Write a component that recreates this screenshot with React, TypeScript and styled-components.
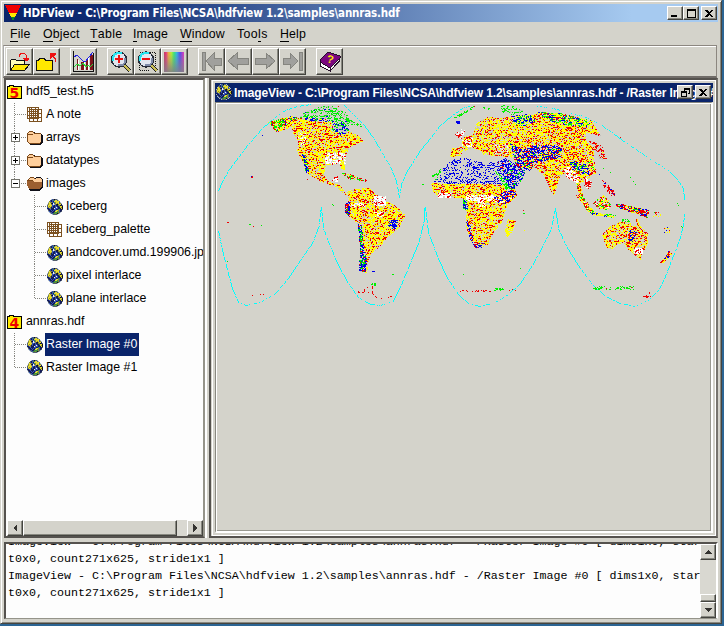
import React from "react";
import styled, { createGlobalStyle, css } from "styled-components";

const face = "#d4d3cb";
const navy = "#0a246a";

const GlobalStyle = createGlobalStyle`
  * { box-sizing: border-box; }
  html, body { margin: 0; padding: 0; overflow: hidden; background: #2c6594; }
  body { width: 724px; height: 626px; }
  svg { display: block; flex: none; shape-rendering: crispEdges; }
`;

const raised = css`
  border: 1px solid;
  border-color: #fff #44443f #44443f #fff;
  box-shadow: inset -1px -1px 0 #888880;
`;

const Window = styled.main`
  width: 722px;
  height: 624px;
  display: flex;
  flex-direction: column;
  padding: 2px 3px 3px 2px;
  background: ${face};
  border: 1px solid;
  border-color: ${face} #44443f #44443f ${face};
  box-shadow: inset 1px 1px 0 #fff, inset -1px -1px 0 #888880;
  font: 12.35px "Liberation Sans", Arial, sans-serif;
  color: #000;
`;

const TitleBar = styled.header`
  height: 18px;
  margin: 1px 0 0 1px;
  flex: none;
  display: flex;
  align-items: center;
  padding: 0 1px 0 1px;
  background: linear-gradient(90deg, ${navy} 0%, #0f2b72 14%, #a6caf0 88%);
  color: #fff;
`;

const WindowTitle = styled.h1`
  margin: 0 auto 0 1px;
  font: bold 11.5px "DejaVu Sans Condensed", "DejaVu Sans", sans-serif;
  font-stretch: condensed;
  letter-spacing: -0.16px;
  white-space: nowrap;
`;

const CaptionButton = styled.button<{ $gap?: number }>`
  ${raised}
  width: 16px;
  height: 14px;
  flex: none;
  padding: 0;
  margin-left: ${(p) => p.$gap ?? 0}px;
  background: ${face};
  display: grid;
  place-items: center;
`;

const MenuBar = styled.nav`
  height: 23px;
  flex: none;
  display: flex;
  align-items: center;
  padding: 1px 0 0 7px;
`;

const MenuItem = styled.span<{ $w: number; $ls: number }>`
  width: ${(p) => p.$w}px;
  letter-spacing: ${(p) => p.$ls}px;
  white-space: nowrap;
`;

const Mnemonic = styled.span`
  border-bottom: 1px solid #000;
  display: inline-block;
  line-height: 13px;
`;

const Toolbar = styled.div`
  height: 33px;
  flex: none;
  margin-right: 1px;
  padding: 2px 0 0 2px;
  display: flex;
  gap: 10px;
  border: solid;
  border-width: 1px 1px 2px;
  border-color: #8c8780 #8c8780 #706c68 #aaa;
  box-shadow: inset 0 1px 0 #fff, inset 1px 0 0 #fff;
`;

const ToolGroup = styled.div`
  display: flex;
`;

const ToolButton = styled.button`
  ${raised}
  width: 27px;
  height: 27px;
  padding: 0;
  background: ${face};
  display: grid;
  place-items: center;
`;

const Panes = styled.div`
  height: 460px;
  flex: none;
  display: flex;
`;

const TreePane = styled.aside`
  width: 201px;
  flex: none;
  margin-left: 1px;
  background: #fdfdfd;
  border: 2px solid;
  border-color: #55524e #95948a #55524e #55524e;
  padding-left: 1px;
  display: flex;
  flex-direction: column;
  overflow: hidden;
`;

const Tree = styled.div`
  flex: 1;
  overflow: hidden;
`;

const TreeRow = styled.div`
  height: 23px;
  display: flex;
  align-items: center;
  white-space: nowrap;
`;

const NodeLabel = styled.span<{ $selected?: boolean }>`
  height: 23px;
  line-height: 23px;
  margin-left: 2px;
  padding: 0 2px 0 1px;
  ${(p) => p.$selected && css`background: ${navy}; color: #fff;`}
`;

const IndentCell = styled.span`
  width: 20px;
  flex: none;
`;

const Splitter = styled.div`
  width: 4px;
  flex: none;
  border-left: 2px solid #fff;
`;

const Desktop = styled.section`
  flex: 1;
  min-width: 0;
  border: 2px solid;
  border-color: #55524e #77746e #55524e #55524e;
  padding-left: 1px;
`;

const InnerFrame = styled.article`
  height: 100%;
  padding: 2px;
  border: 1px solid #fff;
  display: flex;
  flex-direction: column;
`;

const InnerTitleBar = styled.header`
  position: relative;
  height: 19px;
  flex: none;
  display: flex;
  align-items: center;
  padding: 0 0 2px 1px;
  background: ${navy};
  color: #fff;
`;

const InnerTitle = styled.h2`
  flex: 1;
  margin: 4px 0 0 2px;
  min-width: 0;
  font-size: 12px;
  line-height: 17px;
  letter-spacing: -0.12px;
  white-space: nowrap;
  overflow: hidden;
`;

const InnerControls = styled.div`
  position: absolute;
  top: 2px;
  right: 2px;
  display: flex;
`;

const Canvas = styled.div`
  flex: 1;
  min-height: 0;
  overflow: hidden;
  border: solid;
  border-width: 1px 2px 2px 1px;
  border-color: #888880 #fff #fff #888880;
  box-shadow: inset 1px 1px 0 #fff, inset -1px -1px 0 #999990;
`;

const Console = styled.section`
  flex: 1;
  min-height: 0;
  margin: 4px 0 1px 1px;
  display: flex;
  background: #fdfdfd;
  border: solid;
  border-width: 2px 2px 1px 2px;
  border-color: #55524e #fff #95948a #55524e;
`;

const Log = styled.pre`
  flex: 1;
  min-width: 0;
  margin: 0;
  padding-left: 2px;
  display: flex;
  flex-direction: column;
  overflow: hidden;
  font: 11.67px/17px "Liberation Mono", "Courier New", monospace;
`;

const LogLine = styled.span<{ $lift?: boolean }>`
  height: 17px;
  margin-top: ${(p) => (p.$lift ? -10 : 0)}px;
  flex: none;
`;

const Scroll = styled.div<{ $vertical?: boolean }>`
  flex: none;
  display: flex;
  flex-direction: ${(p) => (p.$vertical ? "column" : "row")};
  ${(p) => (p.$vertical ? "width: 16px;" : "height: 16px;")}
  background: #d9d8d1;
`;

const ScrollPart = styled.div<{ $w?: number; $h?: number; $push?: boolean; $down?: boolean }>`
  ${raised}
  flex: none;
  width: ${(p) => p.$w ?? 16}px;
  height: ${(p) => p.$h ?? 16}px;
  margin-left: ${(p) => (p.$push ? "auto" : 0)};
  margin-top: ${(p) => (p.$down ? "auto" : 0)};
  background: ${face};
  display: grid;
  place-items: center;
`;

/* ---------- pixel drawing ---------- */

type Pt = [number, number];
type Mix = Record<string, number>;

const palette: Record<string, string> = {
  Y: "#ffff00", R: "#f00000", B: "#0000e8", G: "#00f000", W: "#ffffff", C: "#00ffff", S: "#c2c1bb",
};

function inside(x: number, y: number, poly: Pt[]) {
  let hit = false;
  for (let i = 0, j = poly.length - 1; i < poly.length; j = i++) {
    const [xi, yi] = poly[i];
    const [xj, yj] = poly[j];
    if (yi > y !== yj > y && x < ((xj - xi) * (y - yi)) / (yj - yi) + xi) hit = !hit;
  }
  return hit;
}

const land: Mix = { Y: 0.5, R: 0.19, S: 0.08 };
const box = (a: number, b: number, c: number, d: number): Pt[] => [[a, b], [c, b], [c, d], [a, d]];

const regions: { shape: Pt[]; mix: Mix; over?: boolean }[] = [
  { shape: [[274,125],[280,118],[292,117],[322,117],[337,127],[352,132],[360,137],[364,141],[350,147],[347,153],[344,160],[342,170],[340,164],[326,165],[324,175],[329,182],[339,184],[347,195],[343,194],[337,187],[319,181],[307,173],[302,160],[297,151],[299,142],[293,134],[292,127],[278,132]], mix: land },
  { shape: [[305,112],[325,105],[345,111],[355,125],[345,128],[328,119],[298,118]], mix: { G: 0.3, S: 0.15, B: 0.02 }, over: true },
  { shape: [[345,117],[364,126],[361,128],[345,120]], mix: { G: 0.4 } },
  { shape: [[268,122],[292,116],[298,118],[276,132]], mix: { G: 0.24, Y: 0.3, R: 0.22, B: 0.05 }, over: true },
  { shape: [[304,117],[334,121],[345,132],[340,135],[330,122],[304,120]], mix: { B: 0.4, G: 0.1, Y: 0.2 }, over: true },
  { shape: [[334,126],[342,122],[350,130],[345,135],[331,130]], mix: { B: 0.23, G: 0.25, S: 0.1 }, over: true },
  { shape: box(325,153,346,164), mix: { W: 0.4, Y: 0.12, R: 0.13 }, over: true },
  { shape: box(298,133,306,145), mix: { W: 0.24, Y: 0.3, R: 0.2 }, over: true },
  { shape: [[302,154],[306,156],[309,172],[306,173]], mix: { B: 0.6, G: 0.2, Y: 0.1 }, over: true },
  { shape: [[331,178],[338,176],[338,182],[332,181]], mix: { W: 0.4, R: 0.25 }, over: true },
  { shape: [[342,173],[350,174],[367,180],[366,182],[347,179]], mix: { R: 0.25, G: 0.15, Y: 0.1 } },
  { shape: [[340,160],[344,160],[345,170],[341,169]], mix: { Y: 0.7 } },
  { shape: [[347,192],[355,189],[369,188],[377,195],[385,200],[399,208],[406,215],[399,228],[387,238],[379,248],[370,255],[367,273],[360,272],[360,233],[359,225],[350,217],[346,210],[349,200]], mix: land },
  { shape: box(374,196,386,206), mix: { W: 0.6, R: 0.15, S: 0.05 }, over: true },
  { shape: box(351,203,366,207), mix: { W: 0.35, R: 0.2, Y: 0.2 }, over: true },
  { shape: box(374,212,384,217), mix: { W: 0.3, Y: 0.3, R: 0.2 }, over: true },
  { shape: [[389,221],[399,219],[396,230],[388,227]], mix: { B: 0.5, Y: 0.25 }, over: true },
  { shape: [[358,224],[362,226],[364,250],[367,259],[366,272],[359,271],[360,250]], mix: { B: 0.32, G: 0.25, R: 0.15 }, over: true },
  { shape: [[345,205],[350,200],[350,218],[345,212]], mix: { B: 0.35, G: 0.1, R: 0.2, Y: 0.1 }, over: true },
  { shape: [[476,124],[487,117],[500,118],[515,116],[540,114],[560,115],[580,118],[592,122],[601,136],[595,135],[586,132],[586,140],[594,148],[595,170],[588,180],[580,183],[572,178],[566,173],[560,176],[557,186],[554,196],[549,187],[544,175],[535,168],[526,170],[518,163],[510,157],[495,156],[483,155],[482,151],[472,148],[465,151],[462,145],[464,137],[473,135]], mix: { Y: 0.45, R: 0.21, S: 0.08 } },
  { shape: [[452,148],[464,147],[461,156],[450,157]], mix: { Y: 0.5, R: 0.2, S: 0.1 } },
  { shape: [[455,135],[461,128],[465,130],[463,139],[458,139]], mix: { W: 0.2, R: 0.35 } },
  { shape: [[462,140],[473,137],[472,147],[462,146]], mix: { W: 0.35, R: 0.25, Y: 0.15 }, over: true },
  { shape: box(495,144,508,154), mix: { W: 0.14, R: 0.27, Y: 0.22 }, over: true },
  { shape: [[512,116],[530,114],[536,121],[525,127],[513,124]], mix: { B: 0.3, G: 0.14, Y: 0.3 }, over: true },
  { shape: [[535,112],[560,113],[593,121],[588,127],[570,126],[550,121]], mix: { B: 0.14, G: 0.2, Y: 0.3, R: 0.12 }, over: true },
  { shape: [[510,143],[523,150],[536,145],[557,145],[563,150],[560,158],[535,163],[530,171],[516,166]], mix: { B: 0.36, G: 0.05, R: 0.14, Y: 0.14 }, over: true },
  { shape: [[570,161],[590,163],[592,175],[583,174],[571,169]], mix: { B: 0.25, G: 0.18, Y: 0.22, R: 0.05 }, over: true },
  { shape: [[563,167],[570,167],[580,179],[578,184],[567,178]], mix: { W: 0.45, R: 0.2, Y: 0.1 }, over: true },
  { shape: [[586,178],[592,182],[590,190],[584,186]], mix: { W: 0.2, R: 0.4 } },
  { shape: [[589,139],[602,146],[607,159],[600,162],[597,152],[589,146]], mix: { R: 0.28, Y: 0.04, S: 0.12 } },
  { shape: [[588,154],[594,154],[596,174],[589,176]], mix: { R: 0.3, Y: 0.3, G: 0.04 }, over: true },
  { shape: [[452,160],[467,157],[483,163],[497,162],[501,170],[511,190],[500,184],[450,184],[434,182],[437,172],[448,164]], mix: { B: 0.21, S: 0.04 }, over: true },
  { shape: [[432,176],[440,167],[442,171],[436,181]], mix: { G: 0.45 }, over: true },
  { shape: [[497,162],[506,158],[516,165],[526,171],[523,178],[514,191],[507,185]], mix: { B: 0.37, G: 0.08, R: 0.04 }, over: true },
  { shape: [[431,183],[450,184],[500,184],[516,190],[517,196],[507,206],[502,222],[494,232],[488,245],[476,249],[470,238],[466,226],[466,212],[463,198],[445,197],[434,194]], mix: land, over: true },
  { shape: box(466,195,494,201), mix: { W: 0.55, Y: 0.14, R: 0.15 }, over: true },
  { shape: box(478,201,486,207), mix: { W: 0.4, Y: 0.3, R: 0.15 }, over: true },
  { shape: box(438,193,451,198), mix: { W: 0.6, R: 0.18 }, over: true },
  { shape: [[494,196],[510,189],[517,194],[506,204],[495,202]], mix: { B: 0.36, R: 0.2, W: 0.1, Y: 0.12 }, over: true },
  { shape: [[495,171],[498,172],[512,190],[507,191]], mix: { G: 0.45 }, over: true },
  { shape: [[463,199],[467,200],[468,210],[463,210]], mix: { G: 0.3, B: 0.3 }, over: true },
  { shape: [[466,221],[470,222],[474,244],[485,243],[483,248],[475,248],[470,239]], mix: { B: 0.4, R: 0.2, Y: 0.1 }, over: true },
  { shape: [[508,219],[516,221],[512,233],[507,237],[505,231]], mix: { Y: 0.55, R: 0.16 } },
  { shape: [[576,183],[580,183],[583,194],[590,207],[597,213],[588,212],[581,201],[575,196],[579,194]], mix: { R: 0.3, Y: 0.32, G: 0.12, W: 0.06 } },
  { shape: [[593,203],[603,195],[608,199],[612,207],[607,210],[597,208]], mix: { R: 0.34, Y: 0.2, G: 0.08, W: 0.03 } },
  { shape: [[602,180],[606,182],[614,190],[615,196],[611,196],[603,186]], mix: { R: 0.42, B: 0.06 } },
  { shape: [[612,204],[622,204],[635,207],[649,210],[648,218],[636,214],[621,209]], mix: { R: 0.28, B: 0.16, Y: 0.22, G: 0.08 } },
  { shape: [[588,211],[596,213],[617,215],[614,218],[593,215]], mix: { Y: 0.35, G: 0.2, B: 0.13 } },
  { shape: [[602,235],[610,226],[622,221],[630,219],[631,226],[637,226],[637,218],[640,225],[648,234],[648,244],[643,252],[641,260],[636,256],[628,250],[624,243],[618,244],[612,249],[606,247]], mix: { Y: 0.43, R: 0.15, S: 0.1 } },
  { shape: [[629,230],[637,232],[632,243],[628,240]], mix: { B: 0.3, R: 0.25, Y: 0.25 }, over: true },
  { shape: box(634,248,643,254), mix: { W: 0.7, R: 0.2 }, over: true },
  { shape: box(622,219,630,222), mix: { G: 0.5 }, over: true },
  { shape: [[669,250],[673,254],[663,263],[660,263],[666,256]], mix: { Y: 0.38, R: 0.4, B: 0.1 } },
  { shape: [[453,118],[474,106],[476,107],[456,119]], mix: { G: 0.5 } },
  { shape: box(482,107,490,111), mix: { G: 0.3 } },
  { shape: [[500,105],[520,107],[524,112],[512,115],[501,112]], mix: { G: 0.24, S: 0.06 } },
  { shape: box(456,121,460,124), mix: { B: 0.7 } },
  { shape: box(593,286,634,290), mix: { G: 0.28, R: 0.03 } },
  { shape: box(494,288,504,291), mix: { G: 0.5 } },
  { shape: box(457,290,495,292), mix: { R: 0.22 } },
  { shape: box(509,289,518,292), mix: { R: 0.2 } },
  { shape: [[643,294],[649,291],[652,296],[644,299]], mix: { R: 0.25 } },
  { shape: box(371,283,376,286), mix: { G: 0.6 } },
  { shape: box(358,291,369,294), mix: { R: 0.25 } },
  { shape: box(372,271,375,272), mix: { B: 1 } },
  { shape: box(251,176,253,178), mix: { R: 0.5, B: 0.5 } },
  { shape: box(664,227,670,233), mix: { R: 0.12, Y: 0.16, B: 0.05 } },
  { shape: box(653,212,661,217), mix: { R: 0.16, Y: 0.1, G: 0.04 } },
];

const outlines: Pt[][] = [
  [[218,191],[222,181],[229,169],[238,157],[248,144],[262,128],[276,116],[285,110],[297,106],[311,104]],
  [[338,104],[344,105],[352,113],[364,125],[374,139],[382,153],[390,166],[396,181],[399,197],[401,184],[406,172],[412,163],[420,150],[430,138],[440,125],[452,115],[462,108],[474,104]],
  [[537,106],[550,107],[560,110]],
  [[570,113],[584,116],[600,124],[610,131],[625,142],[640,152],[655,162],[668,170],[676,178],[683,188],[684,200]],
  [[218,230],[222,250],[227,270],[232,288],[238,302],[246,305],[260,302],[275,293],[288,278],[300,260],[312,243],[319,225],[320,207]],
  [[321,207],[323,228],[330,246],[338,265],[348,283],[358,297],[370,304],[380,305],[393,301],[402,282],[411,260],[418,243],[424,220],[424,207]],
  [[425,207],[428,232],[437,256],[446,276],[458,294],[468,303],[480,306],[495,302],[508,294],[520,283],[532,265],[543,245],[551,228],[555,208],[558,228],[566,246],[578,265],[592,284],[605,296],[620,303],[635,306],[648,300],[658,290],[665,276],[672,258],[679,240],[683,225],[684,213]],
];

const strokes: { c: string; pts: Pt[]; keep: number }[] = [
  { c: "R", pts: [[362,292],[366,287],[372,286],[372,293],[376,297],[386,298],[392,295]], keep: 0.65 },
  { c: "R", pts: [[242,298],[249,296],[258,294],[264,294],[274,293]], keep: 0.3 },
  { c: "R", pts: [[636,219],[637,224],[641,229],[646,234]], keep: 0.9 },
  { c: "R", pts: [[370,238],[380,238]], keep: 1 },
];

const specks: [string, number, number][] = [
  ["B",262,135],["G",249,224],["G",250,224],["R",253,226],["G",261,225],["G",227,261],["R",227,222],["R",228,222],
  ["G",332,204],["G",333,205],["R",307,179],["G",392,274],["G",393,274],["G",422,184],["G",423,184],["R",523,210],
  ["G",523,213],["G",524,213],["Y",524,230],["G",463,274],["G",520,268],["G",630,177],["G",633,181],["G",635,184],
  ["G",610,172],["G",603,168],["B",599,174],["G",677,203],["G",678,205],["G",681,226],["G",682,227],["R",474,106],
  ["R",338,106],["G",332,106],["R",620,137],
];

function buildMap() {
  let seed = 90417;
  const rnd = () => {
    seed = (seed * 1664525 + 1013904223) >>> 0;
    return seed / 4294967296;
  };
  const cells = new Map<string, string>();
  regions.forEach(({ shape, mix, over }) => {
    const xs = shape.map((p) => p[0]);
    const ys = shape.map((p) => p[1]);
    for (let y = Math.min(...ys); y <= Math.max(...ys); y++) {
      let last = "";
      for (let x = Math.min(...xs); x <= Math.max(...xs); x++) {
        if (!inside(x + 0.5, y + 0.5, shape)) continue;
        let pick = "";
        if (last && rnd() < 0.2) pick = last;
        else {
          let r = rnd();
          for (const key of Object.keys(mix)) {
            if (r < mix[key]) { pick = key; break; }
            r -= mix[key];
          }
        }
        last = pick;
        const id = `${x},${y}`;
        if (pick) cells.set(id, pick);
        else if (over) cells.delete(id);
      }
    }
  });
  const trace = (pts: Pt[], c: string, keep: number) => {
    for (let i = 1; i < pts.length; i++) {
      const [ax, ay] = pts[i - 1];
      const [bx, by] = pts[i];
      const n = Math.max(Math.abs(bx - ax), Math.abs(by - ay));
      const flat = Math.abs(bx - ax) > Math.abs(by - ay) * 1.4 ? 0.6 : 1;
      for (let k = 0; k < n; k++) {
        if (rnd() > keep * flat) continue;
        cells.set(`${Math.round(ax + ((bx - ax) * k) / n)},${Math.round(ay + ((by - ay) * k) / n)}`, c);
      }
    }
  };
  outlines.forEach((o) => trace(o, "C", 0.8));
  strokes.forEach((s) => trace(s.pts, s.c, s.keep));
  specks.forEach(([c, x, y]) => cells.set(`${x},${y}`, c));
  const paths: Record<string, string> = {};
  cells.forEach((c, id) => {
    const [x, y] = id.split(",").map(Number);
    paths[c] = (paths[c] ?? "") + `M${x} ${y}h1v1h-1z`;
  });
  return paths;
}

const mapPaths = buildMap();

const WorldMap = () => (
  <svg width="494" height="420" viewBox="216 103 494 420">
    {Object.keys(mapPaths).map((c) => <path key={c} d={mapPaths[c]} fill={palette[c]} />)}
  </svg>
);

const inks: Record<string, string> = {
  k: "#101018", n: "#141c58", b: "#3454b4", y: "#e6dc30", o: "#8c8a30", g: "#3e8f42", w: "#f3f3f3", s: "#a9b8c8", d: "#555f70",
  p: "#ffcf9c", t: "#9c5f30", l: "#7c4818", r: "#f00000", x: "#55524e", Y: "#ffe800", c: "#ffffb0",
};

const Sprite = ({ rows }: { rows: string[] }) => (
  <svg width={rows[0].length} height={rows.length} viewBox={`0 0 ${rows[0].length} ${rows.length}`}>
    {rows.flatMap((row, y) =>
      [...row].map((ch, x) => ch !== "." && <rect key={`${x}-${y}`} x={x} y={y} width="1" height="1" fill={inks[ch]} />),
    )}
  </svg>
);

const globeRows = [
  "....sbdkdds.....", "...dnbgbyyds....", "..obnbnyyyyyo...", ".syoobbgoyyybs..", ".oyynkwboyoybos.", "soyyobwsonkoyyn.",
  "dyyyybbnbnnooknd", "dyoyobnnbbnngyyk", "boyonbnnbwbnnyok", "nnbonnnwbbbnnnyk", "snnbnnnbbnnggnnd", ".dnnbnbnbyyobnn.",
  ".sbnnbnnyygobnd.", "..sdbnnggggods..", "...sdbggogkds...", ".....sdddds.....",
];

const folderRows = [
  "................", "..llll..........", ".lpppplk........", "lpppppplllllll..", "llllllppppppppk.", "lpppppppppppppkk",
  "lpppppppppppppkk", "lpppppppppppppkk", "lpppppppppppppkk", "lpppppppppppppkk", "lpppppppppppppkk", "lpppppppppppppkk",
  ".lppppppppppplkk", "..lllllllllllkk.", "...kkkkkkkkkkk..", "................",
];

const openFolderRows = [
  "................", "...llll..kkkkk..", "..lpppplkpppppk.", ".lpppppppppppppk", "llllllpppppppppk", "tttttttppppppppk",
  "tttttttttttttttk", "tttttttttttttttk", "tttttttttttttttk", "tttttttttttttttk", ".ttttttttttttttk", ".tttttttttttttkk",
  "..tttttttttttkk.", "..kkkkkkkkkkkk..", "...kkkkkkkkkk...", "................",
];

const Globe = () => <Sprite rows={globeRows} />;
const Folder = ({ open }: { open?: boolean }) => <Sprite rows={open ? openFolderRows : folderRows} />;

const TableIcon = () => (
  <svg width="16" height="16" viewBox="0 0 16 16">
    <path d="M.5.5h11v11H.5zM.5 4.500h11M4.500.5v11M8.500.5v11M.5 8.500h11M2.500.5v2h12v12h-12v-12M3 6.500h12M3 10.500h12M6.500 2.500v12M10.500 2.500v12" fill="none" stroke="#7c5120" />
  </svg>
);

const FileText = styled.text`
  font: bold 14px "DejaVu Sans", sans-serif;
  fill: #f00000;
`;

const FileIcon = ({ digit }: { digit: string }) => (
  <svg width="16" height="16" viewBox="0 0 16 16">
    <path d="M.5 2.500h2v-1h4v1h8v12H.5z" fill="#ffec00" stroke="#000" />
    <FileText x="2.500" y="13.600">{digit}</FileText>
  </svg>
);

const Guide = ({ last, toggle }: { last?: boolean; toggle?: "plus" | "minus" }) => (
  <svg width="20" height="23" viewBox="0 0 20 23">
    <path d={`M7.500 0V${last ? 12 : 23}M8 11.500H20`} fill="none" stroke="#85857f" strokeDasharray="1 1" />
    {toggle && (
      <>
        <path d="M4.500 7.500h8v8h-8z" fill="#fff" stroke="#73736c" />
        <path d={toggle === "plus" ? "M6 11.500h5M8.500 9v5" : "M6 11.500h5"} stroke="#000" />
      </>
    )}
  </svg>
);

const Logo = () => (
  <svg width="17" height="16" viewBox="0 0 17 16">
    <path d="M0 0h16l-4 8H4z" fill="#f00000" />
    <path d="M4 8h8l-2 4H6z" fill="#ffe800" />
    <path d="M6 12h4l-2 4z" fill="#08852a" />
  </svg>
);

const OpenIcon = () => (
  <svg width="21" height="20" viewBox="0 0 21 20">
    <path d="M1.500 18V8.500l1-1h4l1 1h8v4" fill="#ffffb8" stroke="#111" />
    <path d="M1.500 18.500l4-6h15l-5 6z" fill="#ffe800" stroke="#111" />
    <path d="M10.500 4.500v-2l2-1h3l2 2v3" fill="none" stroke="#ee1010" />
    <path d="M13 6h7v1l-2 2h-2z" fill="#ee1010" />
  </svg>
);

const CloseIcon = () => (
  <svg width="21" height="20" viewBox="0 0 21 20">
    <path d="M.5 18.500V8.500h2l1-2h5l1 2h7v10z" fill="#ffe800" stroke="#111" />
    <path d="M14 1h6v1l-2 2 2 3v3h-1V8l-3-3-2 2z" fill="#ee1010" />
  </svg>
);

const ChartIcon = () => (
  <svg width="21" height="21" viewBox="0 0 21 21">
    <path d="M4 19V8h1v11zM8 19v-8h3v8zM13 19V9h2v10zM17 19V4h3v15z" fill="#7d141c" />
    <path d="M5 19V9h1v10zM11 19v-8h1v8zM15 19V7h1v12z" fill="#fff" />
    <path d="M.5 0v20.500H21M20.500 2v18" fill="none" stroke="#111" />
    <path d="M1 6l3-2 6 6 2 1 8-10" fill="none" stroke="#2222e0" />
    <path d="M1 16l3-3 3 2 3-3 3 4 2-2 2 2 3-3" fill="none" stroke="#28d838" strokeWidth="1.200" />
  </svg>
);

const ZoomIcon = ({ out }: { out?: boolean }) => (
  <svg width="22" height="22" viewBox="0 0 22 22">
    {out && <path d="M3 1.500h16M3 19.500h10M2.500 14v5M18.500 2v14" fill="none" stroke="#111" strokeDasharray="1 1" />}
    <path d="M13 13l7 7" stroke="#222" strokeWidth="4" />
    <path d="M14 14l6 6" stroke="#c8bd54" strokeWidth="1.500" />
    <circle cx="9" cy="8.500" r="7.500" fill="#e0e6ef" stroke="#262c38" strokeWidth="1.300" />
    <path d="M3 10V6l2-3 3-1h4" fill="none" stroke="#28e4ef" strokeWidth="2" />
    <path d="M15 7v4l-2 3H8" fill="none" stroke="#7f8ba8" strokeWidth="1.800" />
    <path d={out ? "M5 7h8v2H5z" : "M5 7h3V4h2v3h3v2h-3v3H8V9H5z"} fill="#ee1010" />
  </svg>
);

const PaletteIcon = () => (
  <svg width="21" height="20" viewBox="0 0 21 20">
    <defs>
      <linearGradient id="hues">
        <stop offset="0" stopColor="#c04058" /><stop offset=".1" stopColor="#e83080" /><stop offset=".22" stopColor="#f4a840" />
        <stop offset=".36" stopColor="#b8ef34" /><stop offset=".5" stopColor="#38e878" /><stop offset=".64" stopColor="#30b4e8" />
        <stop offset=".8" stopColor="#5448f4" /><stop offset="1" stopColor="#e838b8" />
      </linearGradient>
      <linearGradient id="fade" x2="0" y2="1">
        <stop offset="0" stopColor="#888" stopOpacity="0" /><stop offset="1" stopColor="#808088" stopOpacity=".9" />
      </linearGradient>
    </defs>
    <path d="M0 0h20v20H0z" fill="url(#hues)" />
    <path d="M0 0h20v20H0z" fill="url(#fade)" />
  </svg>
);

const arrowShapes = {
  first: "M1 1h3v18H1zM5 10l8-8v5h7v7h-7v5z",
  back: "M0 10l9-8v5h11v6H9v5z",
  next: "M20 10l-9-8v5H0v6h11v5z",
  last: "M17 1h3v18h-3zM16 10L8 2v5H1v6h7v5z",
};

const ArrowIcon = ({ kind }: { kind: keyof typeof arrowShapes }) => (
  <svg width="21" height="21" viewBox="0 0 21 21">
    <path d={arrowShapes[kind]} fill="#a0a09d" stroke="#85857f" strokeWidth="1" />
  </svg>
);

const BookText = styled.text`
  font: bold 11px "Liberation Sans", sans-serif;
  fill: #fff000;
`;

const BookIcon = () => (
  <svg width="22" height="21" viewBox="0 0 22 21">
    <path d="M1 10l10 7v3L1 15z" fill="#fff" stroke="#27122a" />
    <path d="M11 17l9-10v3.500L11 20z" fill="#f4f4f4" stroke="#27122a" />
    <path d="M9 1l12 4v2L11 17 1 11V9z" fill="#7a087f" stroke="#27122a" />
    <BookText x="8" y="12" transform="rotate(12 11 8)">?</BookText>
  </svg>
);

const Cross = () => (
  <svg width="8" height="7" viewBox="0 0 8 7"><path d="M0 0h2l2 2 2-2h2L5 3.500 8 7H6L4 5 2 7H0l3-3.500z" /></svg>
);

const triangles = { left: "M6 0v8L2 4z", right: "M2 0v8l4-4z", up: "M0 6h8L4 2z", down: "M0 2h8L4 6z" };
const Arrow = ({ to }: { to: keyof typeof triangles }) => (
  <svg width="8" height="8" viewBox="0 0 8 8"><path d={triangles[to]} fill="#33322f" /></svg>
);

/* ---------- content ---------- */

type Menu = { name: string; width: number; spacing?: number; key?: number };

const menus: Menu[] = [
  { name: "File", width: 33 },
  { name: "Object", width: 47 },
  { name: "Table", width: 43, spacing: 0.3 },
  { name: "Image", width: 47 },
  { name: "Window", width: 57 },
  { name: "Tools", width: 43, spacing: 0.4, key: 3 },
  { name: "Help", width: 30 },
];

type Node = { label: string; icon: React.ReactNode; depth: number; last?: boolean; toggle?: "plus" | "minus"; selected?: boolean };

const nodes: Node[] = [
  { label: "hdf5_test.h5", icon: <FileIcon digit="5" />, depth: 0 },
  { label: "A note", icon: <TableIcon />, depth: 1 },
  { label: "arrays", icon: <Folder />, depth: 1, toggle: "plus" },
  { label: "datatypes", icon: <Folder />, depth: 1, toggle: "plus" },
  { label: "images", icon: <Folder open />, depth: 1, toggle: "minus", last: true },
  { label: "Iceberg", icon: <Globe />, depth: 2 },
  { label: "iceberg_palette", icon: <TableIcon />, depth: 2 },
  { label: "landcover.umd.199906.jpg", icon: <Globe />, depth: 2 },
  { label: "pixel interlace", icon: <Globe />, depth: 2 },
  { label: "plane interlace", icon: <Globe />, depth: 2, last: true },
  { label: "annras.hdf", icon: <FileIcon digit="4" />, depth: 0 },
  { label: "Raster Image #0", icon: <Globe />, depth: 1, selected: true },
  { label: "Raster Image #1", icon: <Globe />, depth: 1, last: true },
];

const openedLine = "ImageView - C:\\Program Files\\NCSA\\hdfview 1.2\\samples\\annras.hdf - /Raster Image #0 [ dims1x0, star";
const rangeLine = "t0x0, count271x625, stride1x1 ]";

export default function App() {
  return (
    <>
      <GlobalStyle />
      <Window>
        <TitleBar>
          <Logo />
          <WindowTitle>HDFView - C:\Program Files\NCSA\hdfview 1.2\samples\annras.hdf</WindowTitle>
          <CaptionButton aria-label="Minimize"><svg width="8" height="8"><path d="M0 6h6v2H0z" /></svg></CaptionButton>
          <CaptionButton aria-label="Maximize"><svg width="9" height="9"><path d="M0 0h9v9H0zM1 2v6h7V2z" fillRule="evenodd" /></svg></CaptionButton>
          <CaptionButton aria-label="Close" $gap={2}><Cross /></CaptionButton>
        </TitleBar>
        <MenuBar>
          {menus.map(({ name, width, spacing = 0.15, key = 0 }) => (
            <MenuItem key={name} $w={width} $ls={spacing}>
              {name.slice(0, key)}<Mnemonic>{name[key]}</Mnemonic>{name.slice(key + 1)}
            </MenuItem>
          ))}
        </MenuBar>
        <Toolbar>
          <ToolGroup>
            <ToolButton><OpenIcon /></ToolButton>
            <ToolButton><CloseIcon /></ToolButton>
          </ToolGroup>
          <ToolGroup><ToolButton><ChartIcon /></ToolButton></ToolGroup>
          <ToolGroup>
            <ToolButton><ZoomIcon /></ToolButton>
            <ToolButton><ZoomIcon out /></ToolButton>
            <ToolButton><PaletteIcon /></ToolButton>
          </ToolGroup>
          <ToolGroup>
            <ToolButton><ArrowIcon kind="first" /></ToolButton>
            <ToolButton><ArrowIcon kind="back" /></ToolButton>
            <ToolButton><ArrowIcon kind="next" /></ToolButton>
            <ToolButton><ArrowIcon kind="last" /></ToolButton>
          </ToolGroup>
          <ToolGroup><ToolButton><BookIcon /></ToolButton></ToolGroup>
        </Toolbar>
        <Panes>
          <TreePane>
            <Tree>
              {nodes.map((n) => (
                <TreeRow key={n.label}>
                  {n.depth === 2 && <IndentCell />}
                  {n.depth > 0 && <Guide last={n.last} toggle={n.toggle} />}
                  {n.icon}
                  <NodeLabel $selected={n.selected}>{n.label}</NodeLabel>
                </TreeRow>
              ))}
            </Tree>
            <Scroll>
              <ScrollPart><Arrow to="left" /></ScrollPart>
              <ScrollPart $w={154} />
              <ScrollPart $push><Arrow to="right" /></ScrollPart>
            </Scroll>
          </TreePane>
          <Splitter />
          <Desktop>
            <InnerFrame>
              <InnerTitleBar>
                <Globe />
                <InnerTitle>ImageView - C:\Program Files\NCSA\hdfview 1.2\samples\annras.hdf - /Raster Image #0</InnerTitle>
                <InnerControls>
                  <CaptionButton aria-label="Restore">
                    <svg width="9" height="9"><path d="M3 0h6v6H7V5h1V2H4v1H3zM0 3h6v6H0zM1 5v3h4V5z" fillRule="evenodd" /></svg>
                  </CaptionButton>
                  <CaptionButton aria-label="Close" $gap={2}><Cross /></CaptionButton>
                </InnerControls>
              </InnerTitleBar>
              <Canvas><WorldMap /></Canvas>
            </InnerFrame>
          </Desktop>
        </Panes>
        <Console>
          <Log>
            <LogLine $lift>{openedLine}</LogLine>
            <LogLine>{rangeLine}</LogLine>
            <LogLine>{openedLine}</LogLine>
            <LogLine>{rangeLine}</LogLine>
          </Log>
          <Scroll $vertical>
            <ScrollPart><Arrow to="up" /></ScrollPart>
            <ScrollPart $down $h={8} />
            <ScrollPart><Arrow to="down" /></ScrollPart>
          </Scroll>
        </Console>
      </Window>
    </>
  );
}
